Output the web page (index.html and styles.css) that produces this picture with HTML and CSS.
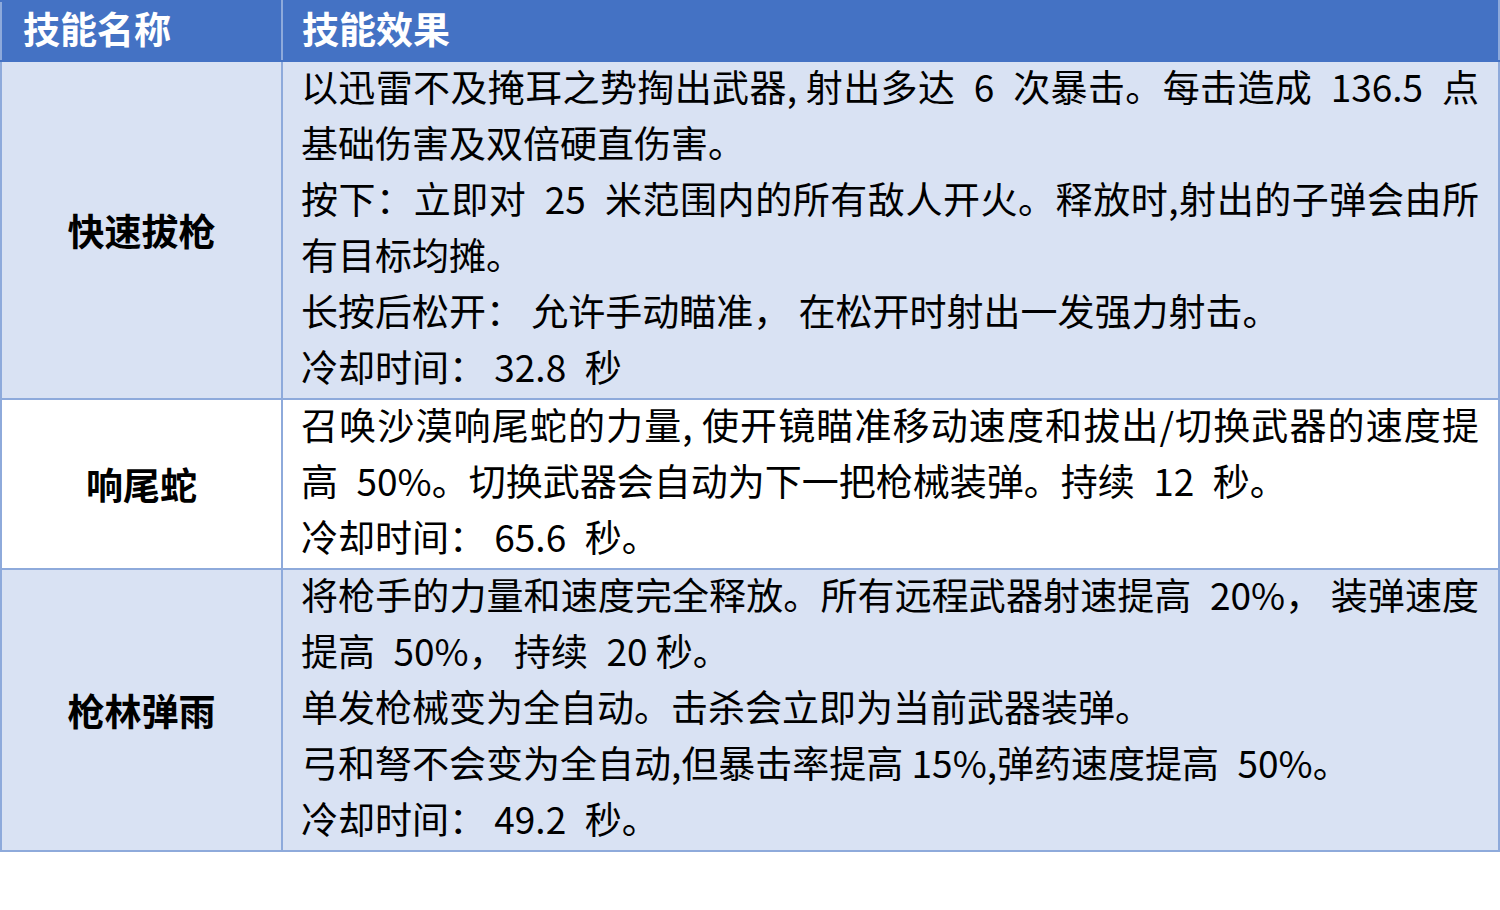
FILE: index.html
```html
<!DOCTYPE html>
<html lang="zh-CN">
<head>
<meta charset="utf-8">
<title>技能</title>
<link rel="stylesheet" href="styles.css">
</head>
<body>
<table class="skills">
  <thead>
    <tr>
      <th class="col-name">技能名称</th>
      <th class="col-effect">技能效果</th>
    </tr>
  </thead>
  <tbody>
    <tr class="alt">
      <td class="name">快速拔枪</td>
      <td class="effect">
        <div class="lines">
          <span class="line just">以迅雷不及掩耳之势掏出武器, 射出多达&ensp;6&ensp;次暴击。每击造成&ensp;136.5&ensp;点</span>
          <span class="line">基础伤害及双倍硬直伤害。</span>
          <span class="line just">按下：立即对&ensp;25&ensp;米范围内的所有敌人开火。释放时,射出的子弹会由所</span>
          <span class="line">有目标均摊。</span>
          <span class="line">长按后松开： 允许手动瞄准， 在松开时射出一发强力射击。</span>
          <span class="line">冷却时间： 32.8&ensp;秒</span>
        </div>
      </td>
    </tr>
    <tr>
      <td class="name">响尾蛇</td>
      <td class="effect">
        <div class="lines">
          <span class="line just">召唤沙漠响尾蛇的力量, 使开镜瞄准移动速度和拔出/切换武器的速度提</span>
          <span class="line">高&ensp;50%。切换武器会自动为下一把枪械装弹。持续&ensp;12&ensp;秒。</span>
          <span class="line">冷却时间： 65.6&ensp;秒。</span>
        </div>
      </td>
    </tr>
    <tr class="alt">
      <td class="name">枪林弹雨</td>
      <td class="effect">
        <div class="lines">
          <span class="line just">将枪手的力量和速度完全释放。所有远程武器射速提高&ensp;20%， 装弹速度</span>
          <span class="line">提高&ensp;50%， 持续&ensp;20 秒。</span>
          <span class="line">单发枪械变为全自动。击杀会立即为当前武器装弹。</span>
          <span class="line">弓和弩不会变为全自动,但暴击率提高 15%,弹药速度提高&ensp;50%。</span>
          <span class="line">冷却时间： 49.2&ensp;秒。</span>
        </div>
      </td>
    </tr>
  </tbody>
</table>
</body>
</html>
```

FILE: styles.css
```css
html, body {
  margin: 0;
  padding: 0;
  background: #ffffff;
}

body {
  font-family: "Noto Sans CJK SC", "Noto Sans", sans-serif;
  color: #000000;
}

.skills {
  width: 1500px;
  border-collapse: collapse;
  table-layout: fixed;
}

.skills th {
  background: #4472C4;
  color: #ffffff;
  font-size: 37px;
  font-weight: 700;
  text-align: left;
  height: 58px;
  padding: 0 0 0 21px;
  line-height: 52px;
  vertical-align: top;
  border: 2px solid #4472C4;
  border-left-color: #8EAADB;
  border-right-color: #8EAADB;
  border-top-color: #4472C4;
}

.skills .col-name {
  width: 258px;
}

.skills th.col-effect {
  padding-left: 19px;
  border-left-color: #4472C4;
}

.skills td {
  border: 2px solid #8EAADB;
  vertical-align: middle;
  padding: 0;
  background: #ffffff;
}

.skills tr.alt td {
  background: #D9E2F3;
}

.skills td.name {
  text-align: center;
  font-size: 37px;
  font-weight: 700;
}

.skills td.effect {
  padding: 0 19px 0 18px;
  font-size: 37px;
  line-height: 56px;
}

.lines {
  margin: -4px 0 4px 0;
}

.line {
  display: block;
  white-space: nowrap;
}

.line.just {
  text-align: justify;
  text-align-last: justify;
}
```
